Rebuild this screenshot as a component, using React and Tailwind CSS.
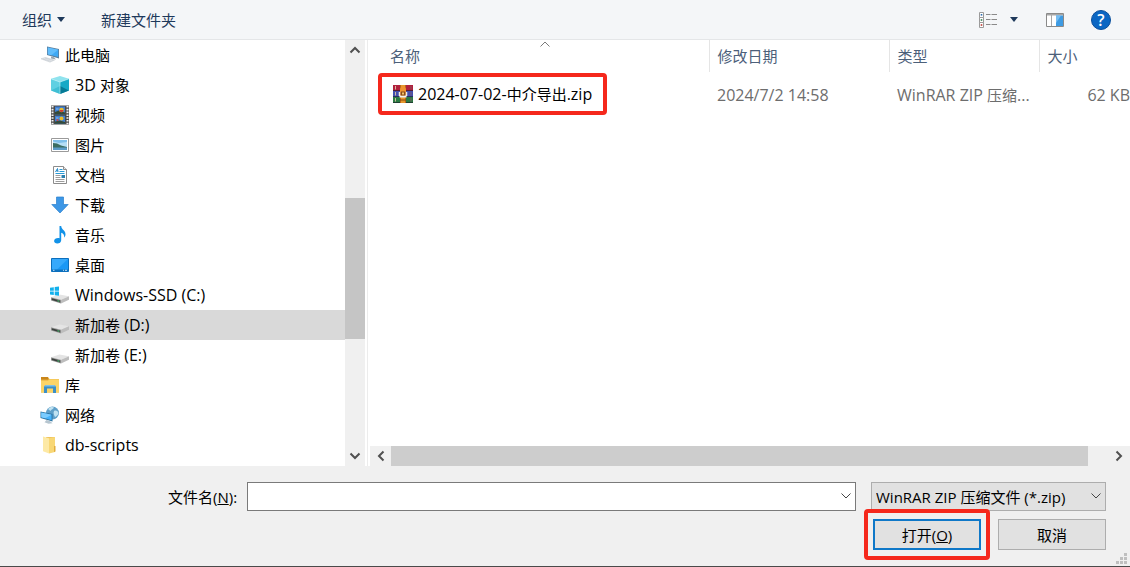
import { useState } from 'react';
import clsx from 'clsx';

const PcIcon = () => (
  <svg viewBox="0 0 20 20" className="size-5">
    <path d="M7 1.5l12 2.500v9.500L7 10z" fill="#5b7e9c" />
    <path d="M7.800 2.600l10.400 2.100v7.400L7.800 9.300z" fill="#3fa9f5" />
    <path d="M7.800 2.600l10.400 2.100-7 5.500-3.400-.9z" fill="#62bdfb" />
    <path d="M11 11.500l3 .8 2 2.200-5-1z" fill="#9aa5ae" />
    <path d="M1 13.800l4.500-1.300 9 2.600-4.500 2z" fill="#e6e9ec" stroke="#c3c9cf" strokeWidth=".6" />
    <path d="M3 14l8 2.300M5 13.200l8 2.200" stroke="#bcc3ca" strokeWidth=".5" />
  </svg>
);

const CubeIcon = () => (
  <svg viewBox="0 0 20 20" className="size-5">
    <path d="M10 1l9 2.800L10 7 1 3.800z" fill="#8fe3ee" />
    <path d="M1 3.800L10 7v12l-9-3.600z" fill="#5fd0e2" />
    <path d="M19 3.800L10 7v12l9-3.600z" fill="#16a9c6" />
    <path d="M1 15.400l9-4.400v8z" fill="#2bb4cc" opacity=".6" />
    <path d="M19 15.400L10 11v8z" fill="#067a96" />
    <path d="M1 3.800L10 7l9-3.200M10 7v12" stroke="#c4f3f8" strokeWidth=".6" fill="none" />
  </svg>
);

const VideoIcon = () => (
  <svg viewBox="0 0 20 20" className="size-5">
    <path d="M1 .5h18v19H1z" fill="#4a4a4a" />
    <path d="M2.500 1v18M17.500 1v18" stroke="#f3f3f3" strokeWidth="2" strokeDasharray="1.600 1.200" />
    <path d="M5 1.500h10v8H5zM5 10.700h10v8H5z" fill="#3f7fd2" />
    <path d="M5 7l4-1.500 6 2v2H5zM5 16.500l5-1 5 1.500v1.700H5z" fill="#354b3a" />
    <circle cx="11.500" cy="5" r="2.300" fill="#e9bd2d" />
    <path d="M9.300 5h4.400l-1.200 2h-2z" fill="#cf3f35" />
    <circle cx="11.500" cy="13.500" r="2" fill="#e9bd2d" />
    <path d="M6 3.500h2.500v1H6zM6 12.500h2.500v1H6z" fill="#8fc3ee" />
    <circle cx="7.500" cy="15" r="1" fill="#d4463c" />
  </svg>
);

const PictureIcon = () => (
  <svg viewBox="0 0 20 20" className="size-5">
    <path d="M1.500 3.500h17v13h-17z" fill="#fff" stroke="#9a9a9a" />
    <path d="M3 5h14v10H3z" fill="#b6def6" />
    <path d="M3 5h14v2L9 8 3 6.500z" fill="#7fbfea" />
    <path d="M3 8l4 .5 4 2 6 1.500v1H3z" fill="#3b6d62" />
    <path d="M3 12.500h14V15H3z" fill="#5b9bc8" />
  </svg>
);

const DocIcon = () => (
  <svg viewBox="0 0 20 20" className="size-5">
    <path d="M3.500 1.500h10l3 3v14h-13z" fill="#fff" stroke="#8c8c8c" />
    <path d="M13.500 1.500v3h3" fill="#e6e6e6" stroke="#8c8c8c" />
    <path d="M5.500 7l2-3.500L8 7M6.200 5.800H8" stroke="#1e88c9" fill="none" />
    <path d="M9.500 4.500h3M9.500 6.500h5M5.500 8.500h9" stroke="#2a9ad6" />
    <path d="M5.500 10.500h5M5.500 12.500h5M5.500 14.500h9M5.500 16.500h9" stroke="#9c9c9c" />
    <path d="M11.500 10h3.500v3h-3.500z" fill="#2a7fae" />
  </svg>
);

const DownloadIcon = () => (
  <svg viewBox="0 0 20 20" className="size-5">
    <path d="M6.500 2h7v7.500h4.700L10 18 1.800 9.500h4.700z" fill="#3d97e6" stroke="#2a7fcd" strokeWidth=".7" />
  </svg>
);

const MusicIcon = () => (
  <svg viewBox="0 0 20 20" className="size-5">
    <path d="M9.500 1h1.700c.2 3.600 4.300 4.300 4.300 8.200 0 1.300-.5 2.500-1.300 3.300.4-2.800-1.300-4.300-3-4.800v7.500c0 2-1.800 3.300-3.900 3.300-1.900 0-3.200-1-3.200-2.400 0-1.700 1.900-3 4-3 .5 0 1 .1 1.400.2z" fill="#1292e8" />
  </svg>
);

const DesktopIcon = () => (
  <svg viewBox="0 0 20 20" className="size-5">
    <path d="M1.500 3.500h17v13h-17z" fill="#1a98f5" stroke="#0c6fbd" />
    <path d="M2 4h16L7 14.500H2z" fill="#36a9fb" />
    <path d="M2 14.500h16V16H2z" fill="#0c72c0" />
    <path d="M3 15.300h1.500M13 15.300h1M15 15.300h2" stroke="#fff" strokeWidth=".8" />
  </svg>
);

const DriveIcon = ({ system }) => (
  <svg viewBox="0 0 20 20" className="size-5">
    <path d="M1 12.200l8.500-2.700 9.500 1.800-8 3.500z" fill="#e4e4e4" />
    <path d="M1 12.200l10 2.600v3.700L1 15.600z" fill="#9b9b9b" />
    <path d="M1.800 13.300l8.400 2.200v1.900l-8.400-2.400z" fill="#3c423e" />
    <path d="M11 14.800l8-3.500v3.500l-8 3.700z" fill="#bdbdbd" />
    <path d="M7.500 15.300l1.800.5v1l-1.800-.5z" fill="#4fd07c" />
    {system && (
      <>
        <path d="M0 1h9.500v9.500H0z" fill="#fff" />
        <path d="M0 2.700l3.800-.5v3.500H0zM4.700 2.100L9 1.500v4.200H4.700zM0 6.600h3.800v3.500L0 9.600zM4.700 6.600H9v4.200l-4.300-.6z" fill="#12b0ec" />
      </>
    )}
  </svg>
);

const LibraryIcon = () => (
  <svg viewBox="0 0 20 20" className="size-5">
    <path d="M1 2h7l1.500 2H19v13.500H1z" fill="#e3a93a" />
    <path d="M1 2h7v2.500H1z" fill="#c9861b" />
    <path d="M1 5.500h7l1.500-1.300H19v13.300H1z" fill="#fbd467" />
    <path d="M4 18v-6.500l1.500-1.500h9l1.500 1.500V18h-3v-4.500H7V18z" fill="#3b8fc7" />
    <path d="M4 11.500L5.500 10h9l1.500 1.500z" fill="#7fc1e8" />
  </svg>
);

const NetworkIcon = () => (
  <svg viewBox="0 0 20 20" className="size-5">
    <circle cx="12.500" cy="8" r="6.500" fill="#5f9fc8" />
    <path d="M8 4c2-2.500 5-2.500 6-1.500-.5 2-3 1.500-3.500 3.500zM14 6c2-1 4 0 4.500 2-.5 2-2 3.500-3.500 4-1-2-2-4-1-6z" fill="#c0e2f1" />
    <path d="M.5 6.500l12 2.500v7.500L.5 13z" fill="#28719f" />
    <path d="M1.300 7.600l10.300 2.200v5.400L1.300 12.200z" fill="#46b2fa" />
    <path d="M1.300 7.600l10.300 2.200-6.500 3.500-3.800-1.100z" fill="#7bccff" />
    <path d="M6.500 15l3 .8 3 2.400-4 .6-4-1.500z" fill="#b6c5cf" />
  </svg>
);

const FolderIcon = () => (
  <svg viewBox="0 0 20 20" className="size-5">
    <path d="M6 2h9v15H6z" fill="#efc35c" />
    <path d="M3 1.500l6 1.800v15.200l-6-2.300z" fill="#fde9a5" />
    <path d="M9 3.300L15 2v15l-6 1.500z" fill="#f8d775" />
    <path d="M14 11h1.500v5.500L14 17z" fill="#e2ad3d" />
  </svg>
);

const RarIcon = () => (
  <svg viewBox="0 0 20 18" className="h-[18px] w-5">
    <path d="M0 0h20v6H0z" fill="#b0203c" />
    <path d="M0 6h20v6H0z" fill="#4450ae" />
    <path d="M0 12h20v6H0z" fill="#2a7a42" />
    <path d="M0 5.500h20M0 11.500h20M0 17.500h20" stroke="#1b1b28" strokeOpacity=".6" />
    <path d="M2.500 1v3.500M2.500 7v3.500M2.500 13v3.500" stroke="#e0c3a6" strokeWidth=".9" />
    <path d="M18 1v3.500M18 7v3.500M18 13v3.500" stroke="#8a5a68" strokeWidth=".8" />
    <path d="M7 0h6v18H7z" fill="#b8651a" />
    <path d="M8 0h4v18H8z" fill="#e5982c" />
    <path d="M7 15h6" stroke="#8a480c" />
    <path d="M7 5c0-5 6-5 6 0v2H7z" fill="#f0922f" />
    <path d="M6.500 7v4M13.500 7v4" stroke="#f6ede0" strokeWidth="1.500" />
    <path d="M6.500 10.500h7v2h-7z" fill="#f2f2f2" />
    <path d="M8 6.500h4v4H8z" fill="#8a4a18" />
    <path d="M9 7.500h2v2H9z" fill="#f3c46a" />
  </svg>
);

const Chevron = ({ className, bold }) => (
  <svg viewBox="0 0 12 12" className={clsx('size-3', className)}>
    <path d="M1.500 3.500L6 8l4.500-4.500" fill="none" stroke="currentColor" strokeWidth={bold ? 2 : 1} />
  </svg>
);

const Caret = () => (
  <svg viewBox="0 0 8 5" className="h-[5px] w-2">
    <path d="M0 0h8L4 5z" fill="currentColor" />
  </svg>
);

// Latin runs are set one pixel larger than the Chinese around them
const Mixed = ({ text }) => (
  <span className="whitespace-pre">
    {text.split(/([\u4e00-\u9fff]+)/).map((part, i) => (
      <span key={i} className={i % 2 ? 'text-[15px]' : 'text-[16px]'}>{part}</span>
    ))}
  </span>
);

const places = [
  { name: '此电脑', icon: <PcIcon />, root: true },
  { name: '3D 对象', icon: <CubeIcon /> },
  { name: '视频', icon: <VideoIcon /> },
  { name: '图片', icon: <PictureIcon /> },
  { name: '文档', icon: <DocIcon /> },
  { name: '下载', icon: <DownloadIcon /> },
  { name: '音乐', icon: <MusicIcon /> },
  { name: '桌面', icon: <DesktopIcon /> },
  { name: 'Windows-SSD (C:)', icon: <DriveIcon system /> },
  { name: '新加卷 (D:)', icon: <DriveIcon /> },
  { name: '新加卷 (E:)', icon: <DriveIcon /> },
  { name: '库', icon: <LibraryIcon />, root: true },
  { name: '网络', icon: <NetworkIcon />, root: true },
  { name: 'db-scripts', icon: <FolderIcon />, root: true },
];

const files = [
  { name: '2024-07-02-中介导出.zip', date: '2024/7/2 14:58', type: 'WinRAR ZIP 压缩...', size: '62 KB', marked: true },
];

const Toolbar = () => (
  <header className="flex h-10 items-center border-b border-[#e4e6e8] bg-[#f4f6f8] pr-[19px] pl-[22px] text-[#1e395b]">
    <button className="flex items-center gap-[5px]">
      组织
      <Caret />
    </button>
    <button className="ml-9">新建文件夹</button>
    <div className="ml-auto flex items-center">
      <button aria-label="视图">
        <svg viewBox="0 0 18 16" className="h-4 w-[18px]">
          <path d="M.5 .5h4v5h-4zM.5 5.500h4v5h-4zM.5 10.500h4v5h-4z" fill="#fff" stroke="#9a9a9a" />
          <path d="M1.700 2h1.600v1.600H1.700z" fill="#2b6cb0" />
          <path d="M1.700 7.200h1.600v1.600H1.700z" fill="#2f7d4f" />
          <path d="M1.700 12.200h1.600v1.600H1.700z" fill="#b8352d" />
          <path d="M7 2.500h4.500M12.500 2.500H18M7 7.500h4.500M12.500 7.500H18M7 12.500h4.500M12.500 12.500H18" stroke="#8a8a8a" />
        </svg>
      </button>
      <button className="ml-[13px]" aria-label="更多视图"><Caret /></button>
      <button className="ml-7" aria-label="预览窗格">
        <svg viewBox="0 0 18 14" className="h-[14px] w-[18px]">
          <path d="M.5 .5h17v13H.5z" fill="#fff" stroke="#8a8a8a" />
          <path d="M1 1h16v1.500H1z" fill="#a7a7a7" />
          <path d="M5.500 2v11" stroke="#a7a7a7" />
          <path d="M10 2.500h7V13h-7z" fill="#3e9be3" />
          <path d="M10 2.500h5L10 10z" fill="#76bdf2" />
        </svg>
      </button>
      <button className="ml-[27px] flex size-5 items-center justify-center rounded-full border border-[#0a4f9c] bg-[#0b66c3] text-[16px] leading-5 font-semibold text-white" aria-label="帮助">?</button>
    </div>
  </header>
);

const Sidebar = ({ selected, onSelect }) => (
  <nav className="flex w-[365px] shrink-0">
    <ul className="flex-1">
      {places.map((place) => (
        <li key={place.name}>
          <button
            onClick={() => onSelect(place.name)}
            className={clsx(
              'flex h-[30px] w-full items-center gap-[5px] text-left',
              place.root ? 'pl-10' : 'pl-[50px]',
              place.name === selected && 'bg-[#d9d9d9]'
            )}
          >
            {place.icon}
            <Mixed text={place.name} />
          </button>
        </li>
      ))}
    </ul>
    <div className="flex w-5 flex-col bg-[#f0f0f0] text-[#505050]">
      <button className="flex h-5 items-center justify-center" aria-label="向上滚动"><Chevron bold className="rotate-180" /></button>
      <div className="grow-[138]" />
      <div className="grow-[141] bg-[#c5c5c5]" />
      <div className="grow-[107]" />
      <button className="flex h-5 items-center justify-center" aria-label="向下滚动"><Chevron bold /></button>
    </div>
  </nav>
);

const FileList = () => (
  <section className="ml-[2px] flex min-w-0 flex-1 flex-col border-l border-[#ececec]">
    <div className="flex-1 pl-[14px]">
      <table className="w-full table-fixed text-left text-[#6d6d6d]">
        <thead>
          <tr className="h-8 text-[#4c607a]">
            <th className="relative w-[327px] border-r border-[#e5e5e5] pl-2 font-normal">
              名称
              <Chevron className="absolute -top-[2px] left-1/2 -translate-x-1/2 rotate-180 text-[#7a7a7a]" />
            </th>
            <th className="w-[180px] border-r border-[#e5e5e5] pl-2 font-normal">修改日期</th>
            <th className="w-[150px] border-r border-[#e5e5e5] pl-2 font-normal">类型</th>
            <th className="pl-2 font-normal">大小</th>
          </tr>
        </thead>
        <tbody>
          {files.map((file) => (
            <tr key={file.name} className="h-[38px] whitespace-nowrap">
              <td className="pt-2 pl-[11px]">
                <div className="relative inline-flex items-center gap-[5px] text-black">
                  <RarIcon />
                  <Mixed text={file.name} />
                  {file.marked && <span className="absolute -inset-x-[15px] -inset-y-[11px] rounded-[4px] border-4 border-[#f5281c]" />}
                </div>
              </td>
              <td className="pt-2 pl-2"><Mixed text={file.date} /></td>
              <td className="pt-2 pl-2"><Mixed text={file.type} /></td>
              <td className="pt-2 text-right"><Mixed text={file.size} /></td>
            </tr>
          ))}
        </tbody>
      </table>
    </div>
    <div className="ml-[2px] flex h-5 bg-[#f0f0f0] text-[#505050]">
      <button className="flex w-[21px] items-center justify-center" aria-label="向左滚动"><Chevron bold className="rotate-90" /></button>
      <div className="grow-[697] bg-[#cdcdcd]" />
      <div className="grow-[20]" />
      <button className="flex w-[22px] items-center justify-center" aria-label="向右滚动"><Chevron bold className="-rotate-90" /></button>
    </div>
  </section>
);

const Footer = () => (
  <footer className="relative flex flex-col gap-2 border-b border-[#4a4a4a] bg-[#f0f0f0] py-4 pr-6 pl-[168px]">
    <div className="flex h-[29px] items-center">
      <label htmlFor="filename" className="w-[79px] shrink-0">文件名(<u>N</u>):</label>
      <div className="relative h-full flex-1">
        <input id="filename" type="text" className="h-full w-full border border-[#7a7a7a] bg-white px-1 pr-6" />
        <Chevron className="absolute top-2 right-1 text-[#444]" />
      </div>
      <div className="relative ml-[15px] h-full w-[235px]">
        <select aria-label="文件类型" className="h-full w-full appearance-none border border-[#adadad] bg-[#e1e1e1] pl-1">
          <option>WinRAR ZIP 压缩文件 (*.zip)</option>
        </select>
        <Chevron className="pointer-events-none absolute top-2 right-1 text-[#444]" />
      </div>
    </div>
    <div className="flex h-[31px] justify-end gap-[17px]">
      <div className="relative">
        <button className="h-full w-[108px] border-2 border-[#0f78c8] bg-[#e1e1e1]">打开(<u>O</u>)</button>
        <span className="pointer-events-none absolute -inset-x-[9px] -inset-y-[10px] rounded-[4px] border-4 border-[#f5281c]" />
      </div>
      <button className="w-[108px] border border-[#adadad] bg-[#e1e1e1]">取消</button>
    </div>
    <svg viewBox="0 0 11 11" className="absolute right-[3px] bottom-[2px] size-[11px]">
      <path d="M8 0h3v3H8zM4 4h3v3H4zM8 4h3v3H8zM0 8h3v3H0zM4 8h3v3H4zM8 8h3v3H8z" fill="#bfbfbf" />
    </svg>
  </footer>
);

export default function App() {
  const [selected, setSelected] = useState('新加卷 (D:)');

  return (
    <div className="flex min-h-screen flex-col bg-white font-['Open_Sans','Noto_Sans_CJK_SC',sans-serif] text-[15px] leading-5 text-black">
      <Toolbar />
      <main className="flex flex-1">
        <Sidebar selected={selected} onSelect={setSelected} />
        <FileList />
      </main>
      <Footer />
    </div>
  );
}
